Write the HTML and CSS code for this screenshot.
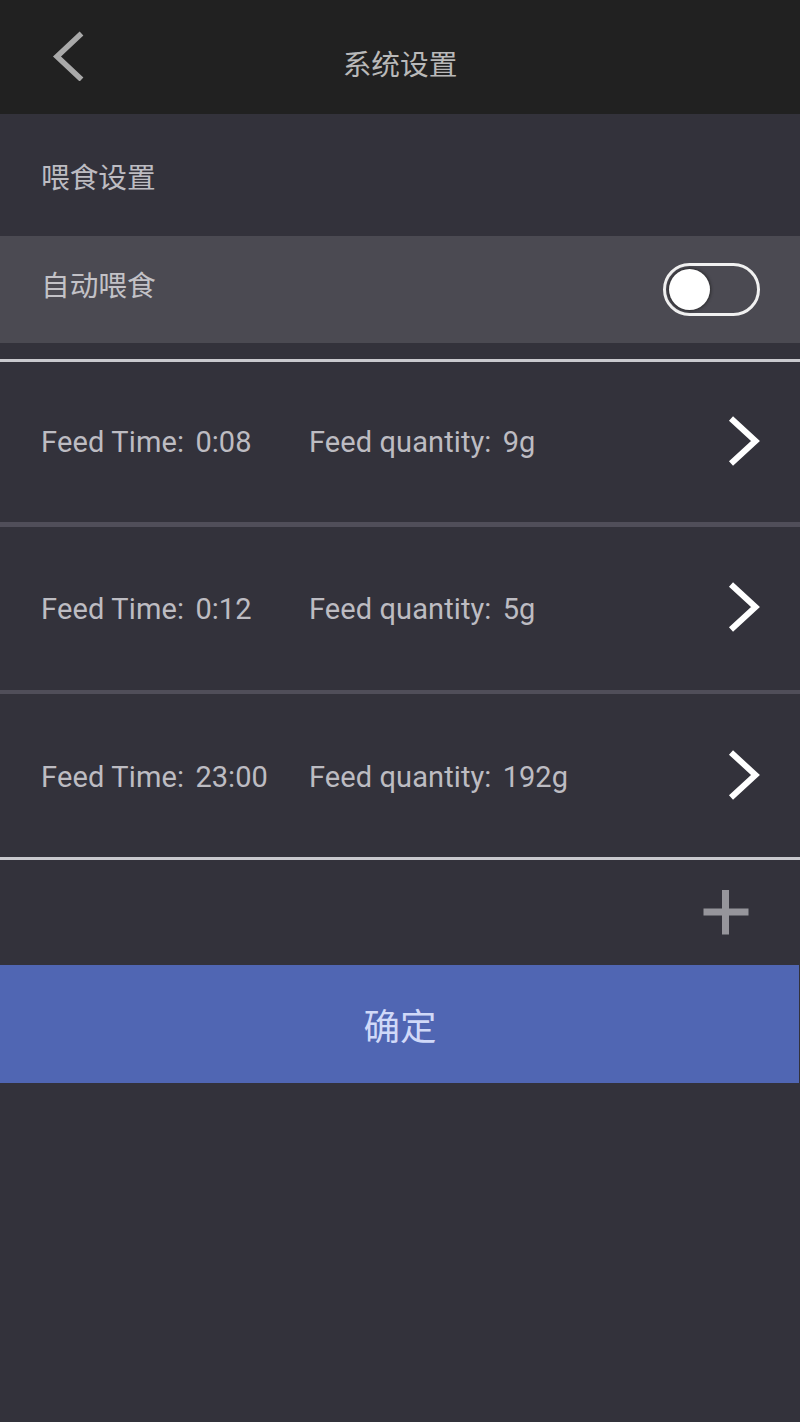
FILE: index.html
```html
<!DOCTYPE html>
<html lang="zh-CN">
<head>
    <meta charset="UTF-8">
    <meta name="viewport" content="width=device-width, initial-scale=1.0">
    <title>系统设置</title>
    <link rel="stylesheet" href="styles.css">
</head>
<body>
    <header>
        <button class="back-btn" aria-label="返回">
            <svg width="32" height="50" viewBox="0 0 32 50"><path d="M29.5 2.5 L5 25.5 L29.5 48.5"/></svg>
        </button>
        <h1>系统设置</h1>
    </header>
    <main>
        <h2>喂食设置</h2>
        <div class="auto-row">
            <span class="auto-label">自动喂食</span>
            <button class="switch" role="switch" aria-checked="false" aria-label="自动喂食"><span class="knob"></span></button>
        </div>
        <ul class="feed-list">
            <li>
                <span class="feed-time">Feed Time: <b>0:08</b></span>
                <span class="feed-qty">Feed quantity: <b>9g</b></span>
                <svg class="arrow" width="32" height="50" viewBox="0 0 32 50"><path d="M3 2.5 L27.5 25 L3 47.5"/></svg>
            </li>
            <li>
                <span class="feed-time">Feed Time: <b>0:12</b></span>
                <span class="feed-qty">Feed quantity: <b>5g</b></span>
                <svg class="arrow" width="32" height="50" viewBox="0 0 32 50"><path d="M3 2.5 L27.5 25 L3 47.5"/></svg>
            </li>
            <li>
                <span class="feed-time">Feed Time: <b>23:00</b></span>
                <span class="feed-qty">Feed quantity: <b>192g</b></span>
                <svg class="arrow" width="32" height="50" viewBox="0 0 32 50"><path d="M3 2.5 L27.5 25 L3 47.5"/></svg>
            </li>
        </ul>
        <div class="add-row">
            <button class="add-btn" aria-label="添加">
                <svg width="46" height="46" viewBox="0 0 46 46"><path d="M0.5 22 H45.5 M22.5 0 V44.5"/></svg>
            </button>
        </div>
        <button class="confirm-btn">确定</button>
    </main>
</body>
</html>
```
FILE: styles.css
```css
:root {
    --bg-color: #33323b; --header-bg: #212121; --row-bg: #4b4a52;
    --text-color: #bdbcc2; --line-color: #c9c9ce; --divider-color: #504e59;
    --primary-color: #5066b3;
}
* { box-sizing: border-box; }
body {
    margin: 0; min-height: 100vh; background-color: var(--bg-color); color: var(--text-color);
    font-family: Roboto, "Noto Sans CJK SC", sans-serif; font-size: 29px;
}
button { padding: 0; border: none; background: none; font: inherit; cursor: pointer; }
svg { display: block; fill: none; }
h1, h2 { margin: 0; font-size: 28.7px; font-weight: 400; line-height: 40px; }
header {
    display: grid; grid-template-columns: 100px 1fr 100px; height: 114px;
    background-color: var(--header-bg);
}
.back-btn { justify-self: start; align-self: start; margin: 31px 0 0 52px; }
.back-btn path { stroke: #a9a9a9; stroke-width: 5.5; }
header h1 { margin-top: 45px; text-align: center; color: #b9b9b9; }
h2 { height: 122px; padding: 44px 0 0 41px; }
.auto-row {
    display: flex; justify-content: space-between; align-items: flex-start; height: 107px;
    padding: 27px 40px 0 41px; background-color: var(--row-bg);
}
.auto-label { line-height: 40px; margin-top: 3px; font-size: 28.7px; color: #c3c2c7; }
.switch {
    display: flex; align-items: center; width: 97px; height: 53px; padding-left: 3px;
    border: 3px solid #f1f1f1; border-radius: 27px;
}
.knob {
    width: 41px; height: 41px; border-radius: 50%; background-color: #fff;
    box-shadow: 0 0 3px 1px rgba(30, 30, 30, 0.7);
}
.feed-list {
    display: grid; grid-template-rows: 165px 167px 163px; margin: 16px 0 0; padding: 0;
    list-style: none; border-top: 3px solid var(--line-color); border-bottom: 3px solid var(--line-color);
}
.feed-list li {
    display: grid; grid-template-columns: 268px 1fr auto; align-items: center;
    padding: 0 40px 0 41px; border-bottom: 4px solid var(--divider-color);
}
.feed-list li:first-child { border-bottom-width: 5px; }
.feed-list li:last-child { padding-top: 2px; border-bottom: none; }
.feed-list b { margin-left: 4px; font-weight: 400; letter-spacing: 0; }
.feed-list span { white-space: pre; letter-spacing: 0.15px; }
.feed-list .feed-qty { letter-spacing: 0.1px; }
.arrow { margin-top: -3px; }
.arrow path { stroke: #fff; stroke-width: 6; }
.add-row { display: flex; justify-content: flex-end; align-items: center; height: 105px; padding-right: 51px; }
.add-btn path { stroke: #96959b; stroke-width: 7; }
.confirm-btn {
    display: block; width: 799px; height: 118px; padding-left: 1px; background-color: var(--primary-color);
    color: #d0d9f8; font-size: 36.5px;
}
```
